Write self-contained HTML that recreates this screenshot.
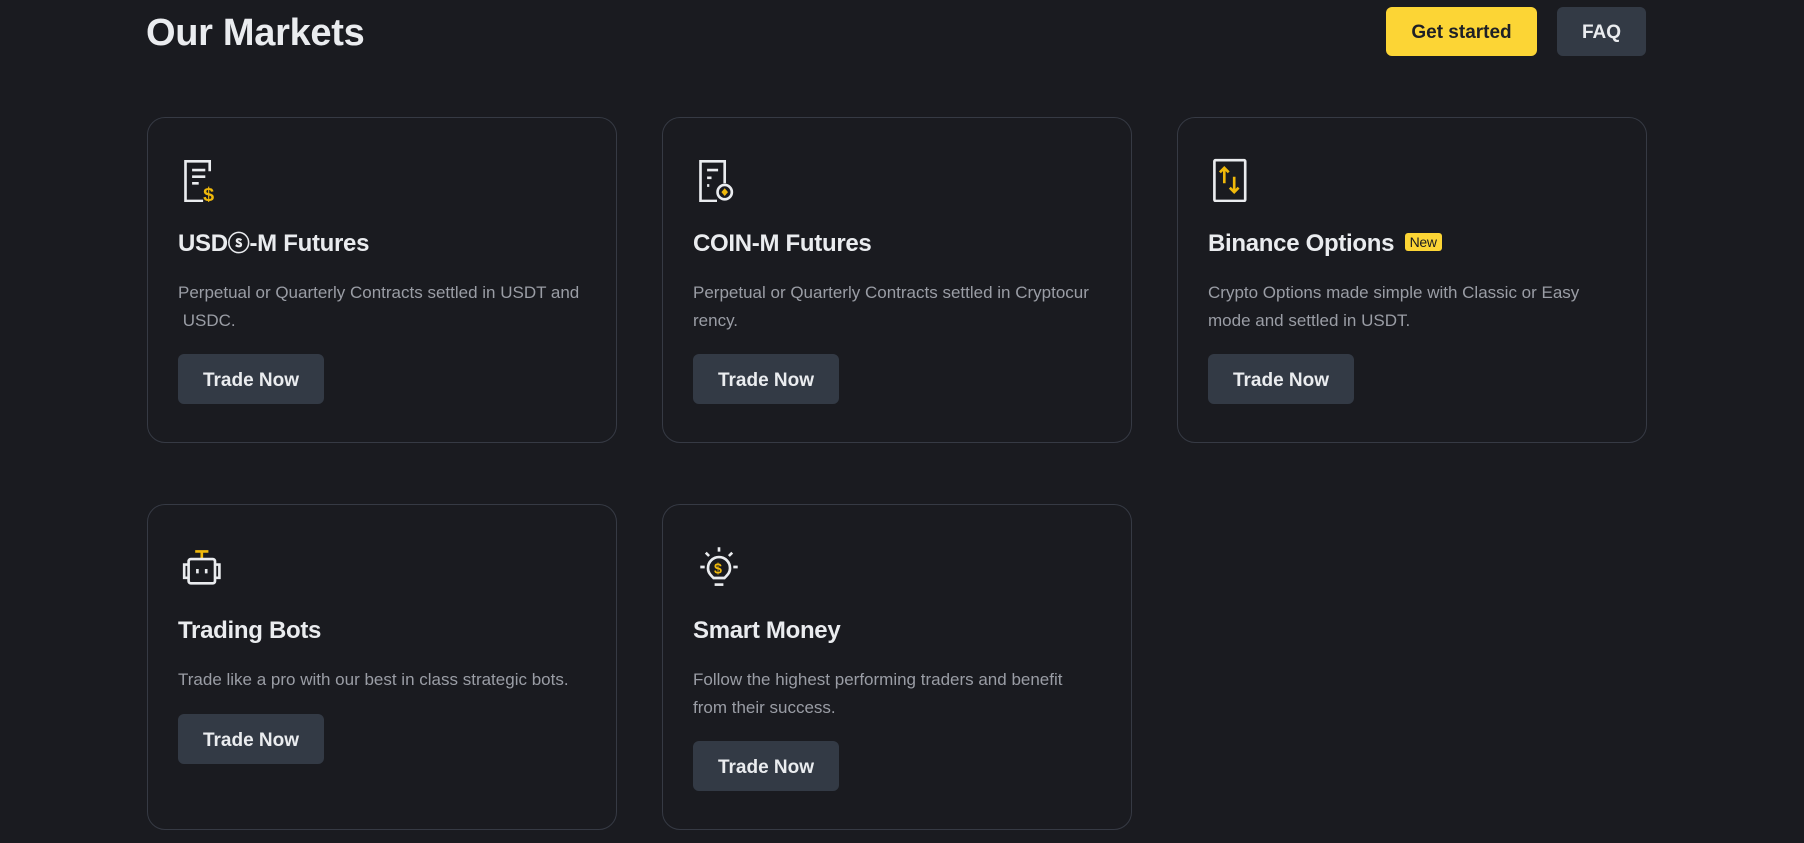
<!DOCTYPE html>
<html><head><meta charset="utf-8"><style>
*{box-sizing:border-box;margin:0;padding:0}
body{width:1804px;height:843px;background:#1a1b20;font-family:"Liberation Sans",sans-serif;color:#eaecef;position:relative;overflow:hidden}
h1{position:absolute;left:146px;top:12px;font-size:38px;font-weight:bold;letter-spacing:-0.3px}
.btn{position:absolute;top:7px;height:49px;border-radius:6px;font-size:19px;font-weight:bold;display:flex;align-items:center;justify-content:center;padding-top:2px}
.card{position:absolute;width:470px;height:326px;border:1px solid #363a44;border-radius:18px}
.ic{position:absolute;left:34px;top:40px}
.t{position:absolute;left:30px;top:111px;height:30px;line-height:30px;font-size:24px;font-weight:bold;letter-spacing:-0.3px;white-space:nowrap}
.d{position:absolute;left:30px;top:161px;width:430px;font-size:17px;line-height:28px;color:#9a9da5}
.tn{position:absolute;left:30px;width:146px;height:50px;background:#333a45;border-radius:6px;font-size:19px;font-weight:bold;display:flex;align-items:center;justify-content:center;color:#eaecef;padding-top:3px}
.new{display:inline-block;background:#fcd535;color:#1a1b20;font-size:14px;font-weight:normal;line-height:18px;padding:0 5px;border-radius:3px;vertical-align:4px;margin-left:4px}
</style></head><body>
<h1>Our Markets</h1>
<div class="btn" style="left:1386px;width:151px;background:#fcd535;color:#1e2026">Get started</div>
<div class="btn" style="left:1557px;width:89px;background:#333a45;color:#eaecef">FAQ</div>

<div class="card" style="left:147px;top:117px">
<svg class="ic" width="40" height="44" viewBox="0 0 36 40" fill="none" stroke-width="2.4"><path d="M25 12V3H3v36h16" stroke="#eaecef"/><path d="M9 11h12M9 17h12M9 23h6" stroke="#eaecef"/><text x="19" y="39" font-family="Liberation Sans" font-weight="bold" font-size="18" fill="#f0b90b" stroke="none">$</text></svg>
<div class="t">USD<span style="font-size:22px;line-height:20px">ⓢ</span>-M Futures</div>
<div class="d">Perpetual or Quarterly Contracts settled in USDT and<br>&nbsp;USDC.</div>
<div class="tn" style="top:236px">Trade Now</div></div>

<div class="card" style="left:662px;top:117px">
<svg class="ic" width="40" height="44" viewBox="0 0 36 40" fill="none" stroke-width="2.4"><path d="M18 39H3V3h22v20" stroke="#eaecef"/><path d="M9 11h10M9 18h4M9 25h2" stroke="#eaecef"/><circle cx="25" cy="31" r="6.5" stroke="#eaecef"/><path d="M25 27.5l3 3.5-3 3.5-3-3.5z" fill="#f0b90b"/></svg>
<div class="t">COIN-M Futures</div>
<div class="d">Perpetual or Quarterly Contracts settled in Cryptocur<br>rency.</div>
<div class="tn" style="top:236px">Trade Now</div></div>

<div class="card" style="left:1177px;top:117px">
<svg class="ic" width="40" height="44" viewBox="0 0 36 40" fill="none" stroke-width="2.4"><rect x="2" y="2" width="28" height="37" rx="1" stroke="#eaecef"/><path d="M11 23V9M7 13l4-4 4 4M20 17v14M16 27l4 4 4-4" stroke="#f0b90b"/></svg>
<div class="t">Binance Options <span class="new">New</span></div>
<div class="d">Crypto Options made simple with Classic or Easy<br>mode and settled in USDT.</div>
<div class="tn" style="top:236px">Trade Now</div></div>

<div class="card" style="left:147px;top:504px">
<svg class="ic" style="top:44px" width="44" height="40" viewBox="0 0 40 36" fill="none" stroke-width="2.4"><path d="M12 2h12M18 2v7" stroke="#f0b90b"/><rect x="6" y="9" width="24" height="22" rx="2" stroke="#eaecef"/><path d="M6 14H2v12h4M30 14h4v12h-4M14 18v4M22 18v4" stroke="#eaecef"/></svg>
<div class="t">Trading Bots</div>
<div class="d">Trade like a pro with our best in class strategic bots.</div>
<div class="tn" style="top:209px">Trade Now</div></div>

<div class="card" style="left:662px;top:504px">
<svg class="ic" style="top:40px" width="44" height="44" viewBox="0 0 40 40" fill="none" stroke-width="2.4"><path d="M20 2v4M8 7l3 3M32 7l-3 3M3 20h4M33 20h4" stroke="#eaecef"/><path d="M15 30c-3-3-5-5-5-9a10 10 0 0 1 20 0c0 4-2 6-5 9z" stroke="#eaecef"/><path d="M16 36h8" stroke="#eaecef"/><text x="15.5" y="26" font-family="Liberation Sans" font-weight="bold" font-size="13" fill="#f0b90b" stroke="none">$</text></svg>
<div class="t">Smart Money</div>
<div class="d">Follow the highest performing traders and benefit<br>from their success.</div>
<div class="tn" style="top:236px">Trade Now</div></div>
</body></html>
